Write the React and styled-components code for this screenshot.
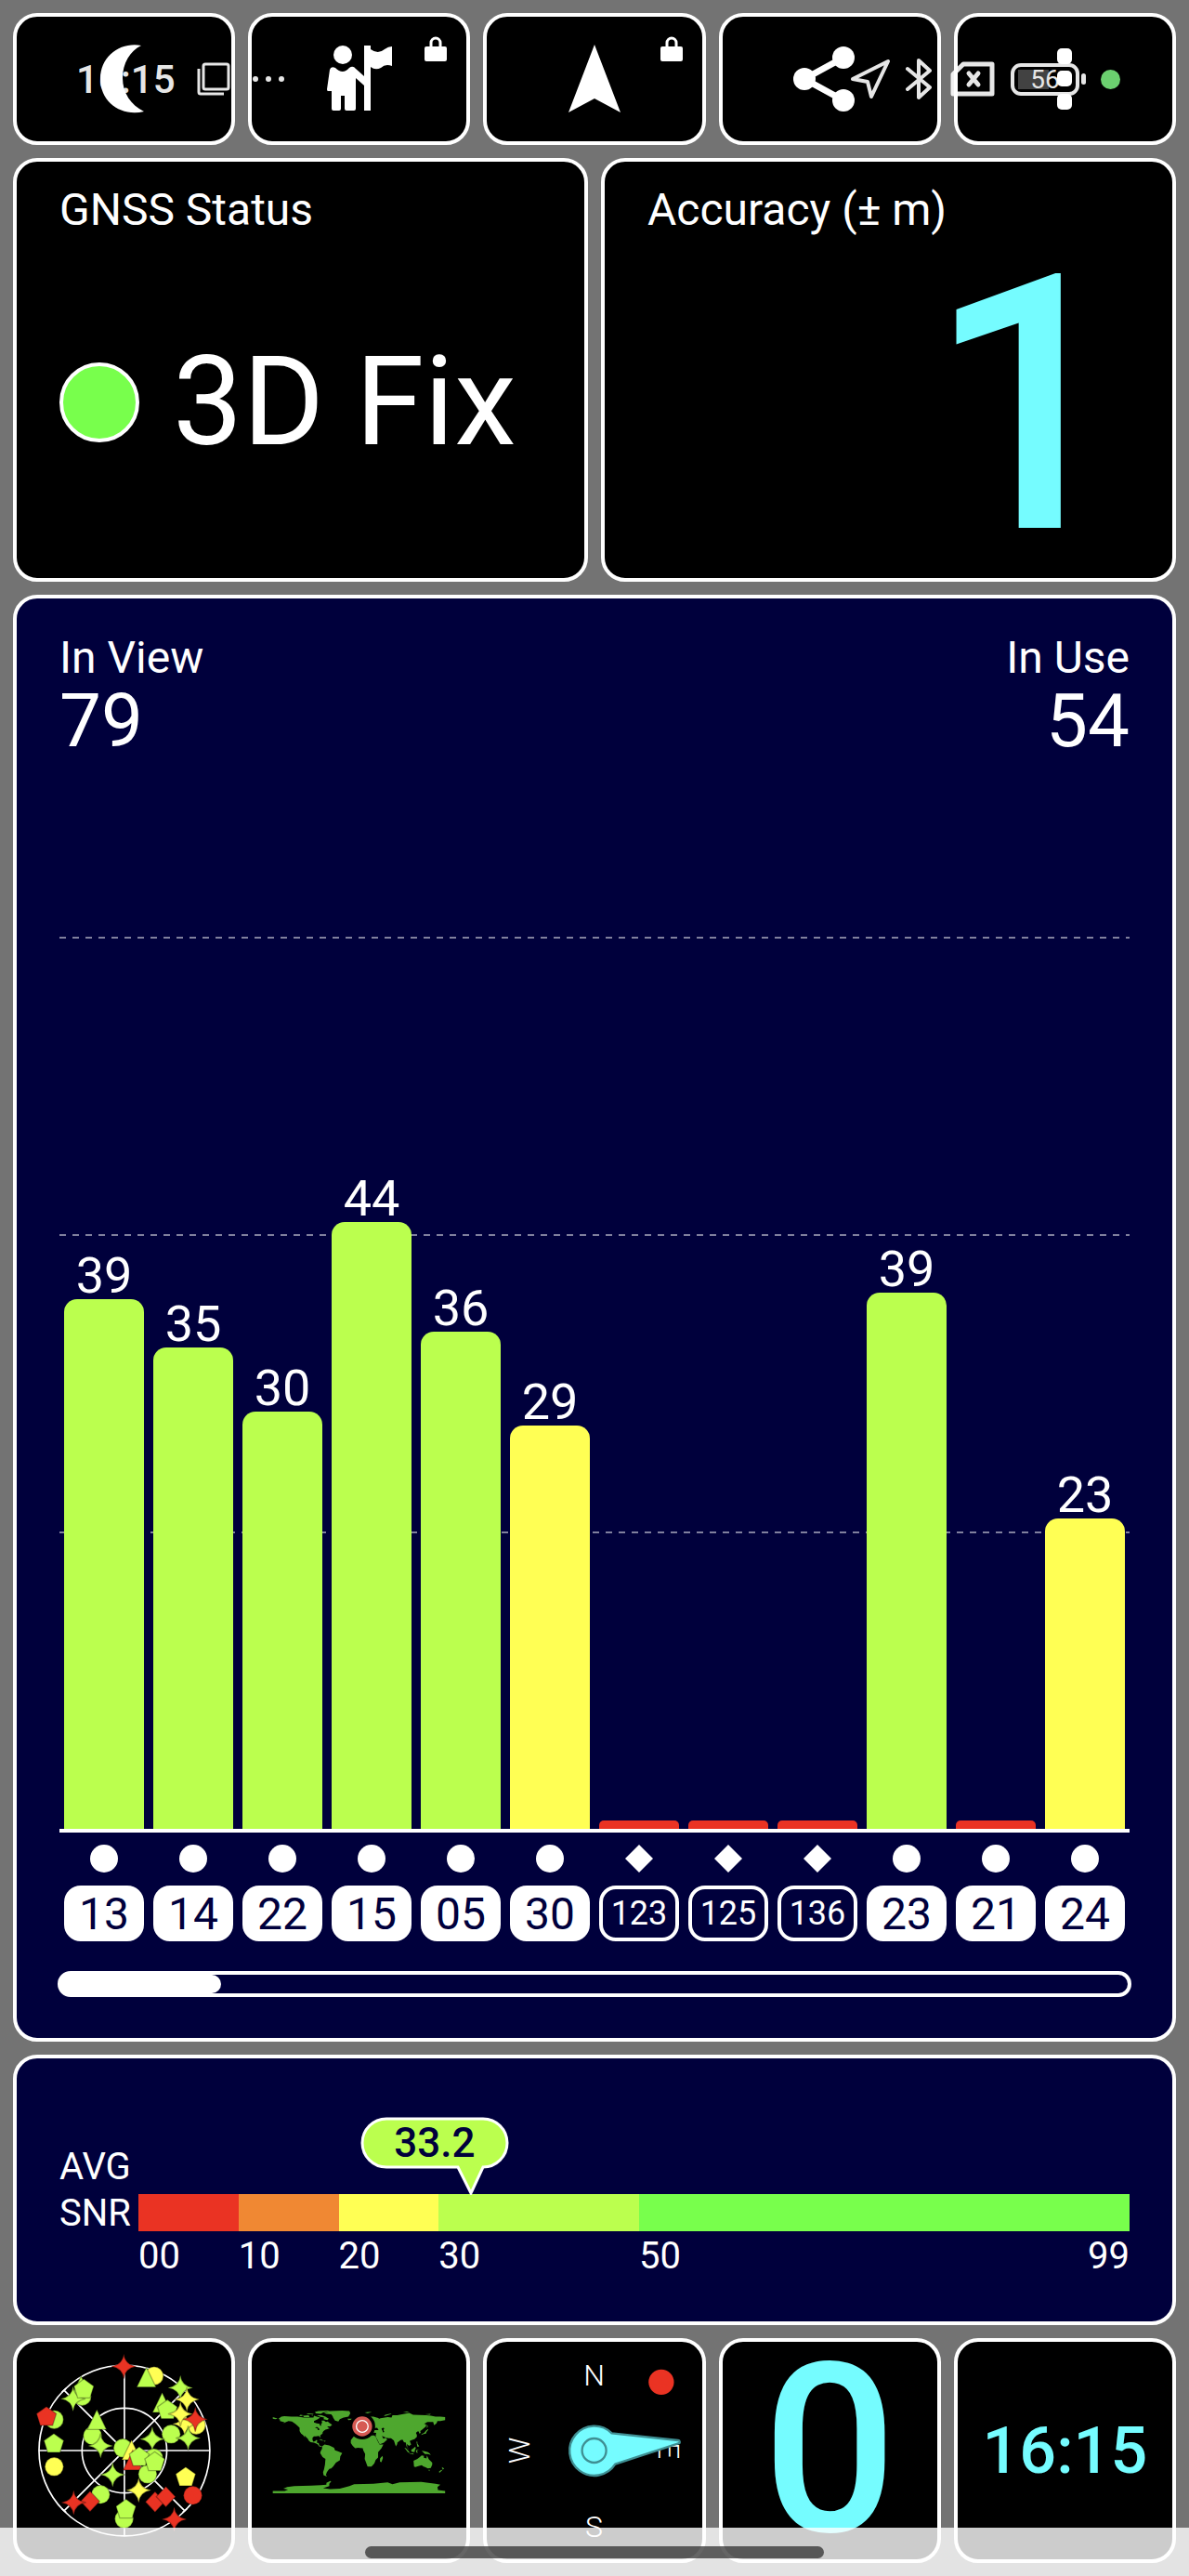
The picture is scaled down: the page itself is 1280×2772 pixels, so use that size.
import styled, { createGlobalStyle } from "styled-components";

const colors = {
  red: "#ea3323",
  orange: "#f08833",
  yellow: "#ffff54",
  lime: "#bbff4e",
  green: "#78ff4c",
  cyan: "#75fcff",
  navy: "#00003c",
  grey: "#737373",
};

const GlobalStyle = createGlobalStyle`
  * {
    box-sizing: border-box;
  }

  body {
    margin: 0;
    background: ${colors.grey};
    color: #fff;
    font-family: Roboto, "Liberation Sans", sans-serif;
  }
`;

const Page = styled.main`
  position: relative;
  display: flex;
  flex-direction: column;
  gap: 14px;
  min-height: 100vh;
  padding: 14px;
`;

const Row = styled.div`
  display: grid;
  grid-template-columns: repeat(${(p) => p.$columns}, minmax(0, 1fr));
  gap: 14px;
`;

const Panel = styled.section`
  display: flex;
  flex-direction: column;
  flex: ${(p) => (p.$grow ? 1 : "none")};
  border: 4px solid #fff;
  border-radius: 26px;
  background: ${(p) => (p.$navy ? colors.navy : "#000")};
`;

const TileButton = styled.button`
  position: relative;
  display: flex;
  align-items: center;
  justify-content: center;
  height: ${(p) => (p.$tall ? 242 : 142)}px;
  padding: 0;
  border: 4px solid #fff;
  border-radius: 26px;
  background: #000;
  color: #fff;
  font: inherit;

  .lock {
    position: absolute;
    top: 21px;
    right: 21px;
  }
`;

const StatusPanel = styled(Panel)`
  height: 456px;
  padding: 24px 46px 10px;
`;

const Label = styled.h2`
  margin: 0;
  font-size: 48px;
  font-weight: 400;
  line-height: 56px;
`;

const FixRow = styled.div`
  display: flex;
  flex: 1;
  align-items: center;
  gap: 36px;
  font-size: 134px;
  line-height: 160px;
  white-space: nowrap;
`;

const FixDot = styled.span`
  width: 86px;
  height: 86px;
  border: 4px solid #fff;
  border-radius: 50%;
  background: ${colors.green};
`;

const AccuracyValue = styled.div`
  display: flex;
  flex: 1;
  align-items: center;
  justify-content: flex-end;
  padding-top: 8px;
  color: ${colors.cyan};
  font-size: 384px;
  font-weight: 500;
  line-height: 350px;
`;

const ChartPanel = styled(Panel)`
  padding: 36px 46px 44px;
`;

const Counts = styled.div`
  display: flex;
  justify-content: space-between;
  margin-bottom: 192px;
`;

const Count = styled.div`
  text-align: ${(p) => p.$align};

  p {
    margin: 0;
    font-size: 80px;
    line-height: 80px;
  }
`;

const Plot = styled.div`
  position: relative;
  display: flex;
  flex: 1;
  min-height: 400px;
  border-bottom: 4px solid #fff;
`;

const GridLines = styled.div`
  position: absolute;
  inset: 0;
  display: grid;
  grid-template-rows: repeat(3, 1fr);

  span {
    height: 2px;
    background: repeating-linear-gradient(
      to right,
      rgb(255 255 255 / 50%) 0 7px,
      transparent 7px 14px
    );
  }
`;

const BarCell = styled.div`
  position: relative;
  display: flex;
  flex: 1;
  flex-direction: column;
  justify-content: flex-end;
  padding: 0 5px;
  font-size: 54px;
  line-height: 50px;
  text-align: center;
`;

const Bar = styled.div`
  flex: none;
  border-radius: ${(p) => (p.$flat ? "5px 5px" : "14px 14px")} 0 0;
  background: ${(p) => p.$color};
`;

const Satellites = styled.div`
  display: flex;
  margin: 13px 0 32px;
`;

const Satellite = styled.div`
  display: flex;
  flex: 1;
  flex-direction: column;
  align-items: center;
  gap: 14px;
  padding: 0 5px;
`;

const SatelliteTag = styled.span`
  display: flex;
  align-items: center;
  justify-content: center;
  width: 100%;
  height: 60px;
  border: 4px solid #fff;
  border-radius: 18px;
  background: ${(p) => (p.$used ? "#fff" : colors.navy)};
  color: ${(p) => (p.$used ? colors.navy : "#fff")};
  font-size: ${(p) => (p.$used ? 48 : 36)}px;
`;

const ScrollTrack = styled.div`
  height: 28px;
  margin: 0 -2px;
  border: 4px solid #fff;
  border-radius: 14px;
`;

const ScrollThumb = styled.div`
  width: 15%;
  height: 20px;
  border-radius: 0 10px 10px 0;
  background: #fff;
`;

const SnrPanel = styled(Panel)`
  flex-direction: row;
  align-items: flex-start;
  height: 291px;
  padding: 92px 46px 0;
`;

const SnrLabel = styled.h2`
  width: 85px;
  margin: 0;
  font-size: 40px;
  font-weight: 400;
  line-height: 50px;
`;

const SnrScale = styled.div`
  position: relative;
  display: flex;
  flex: 1;
  padding-top: 54px;
`;

const SnrSegment = styled.div`
  display: flex;
  flex: ${(p) => p.$span} 0 0;
  justify-content: space-between;
  min-width: 0;
  border-top: 40px solid ${(p) => p.$color};
  font-size: 40px;
  line-height: 54px;
`;

const Bubble = styled.div`
  position: absolute;
  top: -29px;
  width: 160px;
  height: 84px;
  margin-left: -119px;
  color: ${colors.navy};
  font-size: 44px;
  font-weight: 500;
  line-height: 56px;
  text-align: center;

  svg {
    position: absolute;
    inset: 0;
  }

  span {
    position: relative;
  }
`;

const TileNumber = styled.span`
  color: ${colors.cyan};
  font-size: ${(p) => (p.$big ? 254 : 70)}px;
  font-weight: 500;
  line-height: 242px;
`;

const StatusBar = styled.header`
  position: absolute;
  top: 0;
  left: 0;
  right: 0;
  display: flex;
  align-items: center;
  height: 170px;
  padding: 0 74px 0 82px;
  opacity: 0.9;
  font-size: 42px;
  font-weight: 500;
  pointer-events: none;
`;

const StatusGroup = styled.div`
  display: flex;
  align-items: center;
  gap: ${(p) => p.$gap}px;
  margin-left: ${(p) => (p.$end ? "auto" : 0)};
`;

const Battery = styled.span`
  position: relative;
  display: flex;
  align-items: center;
  justify-content: center;
  width: 74px;
  height: 35px;
  margin-right: 6px;
  border: 4px solid #fff;
  border-radius: 11px;
  background: linear-gradient(#4a4a4a, #4a4a4a) 4px 3px / 33px 21px no-repeat;
  font-size: 28px;
  font-weight: 400;

  &::after {
    content: "";
    position: absolute;
    right: -11px;
    width: 5px;
    height: 12px;
    border-radius: 3px;
    background: #fff;
  }
`;

const PrivacyDot = styled.span`
  width: 21px;
  height: 21px;
  border-radius: 50%;
  background: #77e77c;
`;

const NavBar = styled.footer`
  position: absolute;
  right: 0;
  bottom: 0;
  left: 0;
  display: flex;
  align-items: center;
  justify-content: center;
  height: 52px;
  background: rgb(255 255 255 / 80%);
  pointer-events: none;
`;

const HomePill = styled.span`
  width: 494px;
  height: 13px;
  border-radius: 7px;
  background: rgb(44 44 44 / 73%);
`;

const satellites = [
  { id: "13", snr: 39, level: 38.6, used: true },
  { id: "14", snr: 35, level: 35.1, used: true },
  { id: "22", snr: 30, level: 30.4, used: true },
  { id: "15", snr: 44, level: 44.2, used: true },
  { id: "05", snr: 36, level: 36.2, used: true },
  { id: "30", snr: 29, level: 29.4, used: true },
  { id: "123", snr: 0, level: 0.6, diamond: true },
  { id: "125", snr: 0, level: 0.6, diamond: true },
  { id: "136", snr: 0, level: 0.6, diamond: true },
  { id: "23", snr: 39, level: 39.1, used: true },
  { id: "21", snr: 0, level: 0.6, used: true },
  { id: "24", snr: 23, level: 22.6, used: true },
];

const MAX_LEVEL = 65;

const snrColor = (snr) => {
  if (snr >= 50) return colors.green;
  if (snr >= 30) return colors.lime;
  if (snr >= 20) return colors.yellow;
  if (snr >= 10) return colors.orange;
  return colors.red;
};

const snrSegments = [
  { from: "00", span: 10, color: colors.red },
  { from: "10", span: 10, color: colors.orange },
  { from: "20", span: 10, color: colors.yellow },
  { from: "30", span: 20, color: colors.lime },
  { from: "50", span: 49, color: colors.green, to: "99" },
];

const shapes = {
  circle: "M-30 0a30 30 0 1 0 60 0a30 30 0 1 0 -60 0z",
  star: "M0 -40Q4 -6 40 0Q4 6 0 40Q-4 6 -40 0Q-4 -6 0 -40z",
  triangle: "M0 -36L31 28H-31z",
  pentagon: "M0 -32L32 -9L20 29H-20L-32 -9z",
  diamond: "M0 -33L31 0L0 33L-31 0z",
};

const L = colors.lime;
const Y = colors.yellow;
const R = colors.red;

// [shape, x, y, fill], painted from back to front
const sky = [
  ["star", 400, 139, R],
  ["circle", 498, 170, Y],
  ["triangle", 473, 178, L],
  ["star", 583, 208, L],
  ["circle", 265, 236, L],
  ["triangle", 262, 206, L],
  ["star", 236, 244, L],
  ["pentagon", 271, 212, L],
  ["star", 604, 246, Y],
  ["triangle", 524, 260, L],
  ["pentagon", 541, 279, L],
  ["circle", 634, 329, Y],
  ["star", 597, 325, Y],
  ["star", 583, 293, Y],
  ["circle", 175, 311, L],
  ["pentagon", 150, 301, R],
  ["star", 631, 310, R],
  ["circle", 299, 363, L],
  ["triangle", 313, 315, L],
  ["pentagon", 174, 388, L],
  ["star", 325, 396, L],
  ["circle", 553, 358, L],
  ["star", 492, 374, L],
  ["star", 608, 371, L],
  ["circle", 397, 403, L],
  ["triangle", 425, 413, Y],
  ["triangle", 429, 446, R],
  ["circle", 477, 487, L],
  ["circle", 497, 435, L],
  ["pentagon", 450, 431, L],
  ["pentagon", 500, 447, L],
  ["circle", 175, 463, Y],
  ["star", 364, 489, L],
  ["pentagon", 600, 496, Y],
  ["star", 448, 539, Y],
  ["circle", 623, 556, R],
  ["circle", 325, 553, L],
  ["diamond", 291, 575, R],
  ["star", 238, 579, R],
  ["diamond", 501, 577, R],
  ["diamond", 536, 560, R],
  ["circle", 401, 632, L],
  ["pentagon", 407, 600, L],
  ["star", 563, 633, R],
];

// Outlines as longitude,latitude pairs
const land = [
  "-168,66 -162,70 -156,71 -141,70 -128,70 -115,68 -108,68 -95,68 -94,72 -85,69 -81,68 -86,65 -94,61 -94,58 -88,56 -82,55 -82,52 -79,51 -79,55 -77,57 -78,62 -73,62 -69,59 -65,60 -62,57 -56,53 -60,50 -66,50 -65,48 -61,46 -66,44 -70,43 -74,40 -76,37 -76,35 -81,31 -80,26 -82,28 -84,30 -90,29 -94,29 -97,26 -97,21 -95,18 -91,19 -90,21 -87,21 -88,16 -84,15 -83,10 -80,9 -77,8 -79,7 -83,8 -87,13 -94,16 -101,17 -105,20 -107,24 -112,29 -114,31 -113,27 -110,23 -114,28 -117,32 -121,35 -124,40 -124,47 -128,51 -133,55 -140,60 -147,61 -152,59 -160,55 -155,58 -158,59 -165,61 -165,64",
  "-73,78 -60,82 -35,83 -20,82 -18,77 -22,70 -32,68 -40,65 -43,60 -50,62 -54,68 -55,71 -58,75 -68,76",
  "-92,80 -85,82 -65,83 -60,82 -75,79 -80,76 -90,77",
  "-117,72 -105,73 -103,69 -115,69",
  "-88,73 -78,73 -70,70 -63,66 -66,63 -74,65 -73,68 -82,70",
  "-125,72 -122,74 -116,73 -121,71",
  "-110,75 -106,77 -94,76 -97,75 -104,75",
  "-100,73 -96,74 -96,72",
  "-85,22 -80,23 -74,20 -78,20 -82,22",
  "-74,20 -69,19 -72,18",
  "-77,8 -72,12 -62,10 -52,5 -50,0 -44,-2 -35,-6 -39,-13 -40,-21 -48,-26 -54,-34 -58,-38 -62,-39 -65,-43 -67,-46 -69,-51 -67,-55 -74,-52 -75,-46 -73,-40 -71,-30 -70,-18 -76,-14 -81,-6 -80,-2 -77,3",
  "-6,36 10,37 11,33 20,31 32,31 35,28 39,19 43,12 51,12 47,4 40,-4 40,-15 35,-20 32,-28 26,-34 18,-34 12,-18 13,-8 9,0 8,4 -2,5 -8,4 -13,9 -17,15 -17,21 -10,30",
  "44,-17 49,-12 50,-16 47,-25 44,-24",
  "-9,43 -9,37 -5,36 0,39 3,42 8,44 12,42 16,38 18,40 13,45 19,42 23,37 24,41 27,40 27,37 36,36 35,31 35,28 39,21 43,13 45,13 52,16 59,22 56,26 51,24 48,30 57,26 62,25 67,25 73,20 77,8 80,13 80,16 87,21 91,22 94,17 98,16 99,9 103,2 104,1 101,6 100,13 105,9 109,12 106,19 110,21 116,23 121,28 121,32 119,36 122,39 125,39 126,35 129,36 128,40 132,43 140,50 140,54 136,55 143,59 155,59 157,52 162,56 164,61 170,61 180,63 180,69 170,70 160,70 150,72 140,73 113,74 105,78 95,76 80,73 70,73 68,68 60,69 45,67 40,65 42,67 30,70 20,70 12,65 5,61 7,58 11,59 13,55 17,57 18,61 22,65 25,65 21,61 30,60 23,59 20,55 10,54 8,57 8,54 0,50 -4,48 -1,46 -2,43",
  "-180,69 -172,67 -170,66 -175,65 -180,66",
  "-24,66 -15,66 -14,64 -22,63",
  "12,79 20,80 27,80 18,77",
  "52,71 55,74 68,77 66,75 57,72",
  "92,79 100,81 105,79",
  "138,75 150,76 148,74",
  "142,54 144,50 142,46",
  "130,32 131,34 136,36 140,41 144,44 145,43 141,38 140,35 135,34",
  "95,5 98,4 104,-2 106,-6 102,-4",
  "105,-6 114,-7 114,-9 106,-7",
  "109,1 114,4 117,7 119,5 117,1 116,-4 110,-3",
  "119,0 125,2 121,-1 123,-5 120,-5",
  "120,18 122,18 122,14 126,8 122,7 121,13",
  "131,-1 137,-2 144,-4 148,-7 150,-10 144,-8 138,-8 134,-4",
  "114,-22 122,-18 127,-14 131,-11 136,-12 135,-15 141,-17 142,-11 146,-19 153,-26 153,-30 150,-37 144,-38 138,-35 135,-34 131,-31 124,-33 118,-35 115,-34",
  "145,-41 148,-41 147,-44",
  "173,-35 178,-38 175,-41",
  "172,-41 174,-42 168,-47 167,-45",
  "-180,-85 -155,-85 -148,-82 -158,-80 -150,-77 -135,-75 -100,-74 -80,-73 -68,-72 -68,-68 -60,-64 -58,-65 -62,-70 -62,-75 -75,-79 -60,-81 -40,-80 -20,-75 -10,-71 30,-70 60,-67 70,-71 85,-67 130,-66 160,-70 170,-72 164,-77 165,-83 180,-85 180,-90 -180,-90",
];

const lakes = [
  "28,42 31,46 38,47 41,42 35,42",
  "47,45 50,47 53,46 51,42 53,38 50,37 49,41",
  "-92,47 -88,49 -84,46 -82,43 -86,42 -87,46",
];

const Lock = () => (
  <svg className="lock" width="24" height="27" viewBox="0 0 24 27">
    <rect y="11" width="24" height="16" rx="2" fill="#fff" />
    <path d="M7 12V7a5 5 0 0 1 10 0v5" fill="none" stroke="#fff" strokeWidth="3" />
  </svg>
);

const SkyPlot = () => (
  <svg width="100%" height="100%" viewBox="54 60 694 702">
    <g fill="none" stroke="#fff" strokeWidth="5">
      <circle cx="402" cy="411" r="276" />
      <circle cx="402" cy="411" r="137" />
      <path d="M126 411H678M402 135V687M207 216L597 606M207 606L597 216" />
      <path d="M200 222L214 210M590 611L604 599M200 599L214 611M590 210L604 222" />
    </g>
    <g stroke="#000" strokeOpacity="0.3" strokeWidth="4">
      {sky.map(([shape, x, y, fill], i) => (
        <path key={i} d={shapes[shape]} fill={fill} transform={`translate(${x} ${y})`} />
      ))}
    </g>
  </svg>
);

const WorldMap = () => (
  <svg width="100%" height="100%" viewBox="34 60 694 702">
    <g transform="translate(380.5 410) scale(1.547 -1.547)">
      {land.map((points, i) => (
        <polygon key={i} points={points} fill="#4ea72e" />
      ))}
      {lakes.map((points, i) => (
        <polygon key={i} points={points} fill="#000" />
      ))}
    </g>
    <circle cx="391" cy="333" r="42" fill="#000" />
    <circle cx="391" cy="333" r="32" fill="#d65a54" />
    <circle cx="391" cy="333" r="19" fill="none" stroke="#fff" strokeWidth="4" />
  </svg>
);

const Compass = () => (
  <svg width="100%" height="100%" viewBox="43 60 694 702">
    <g fill="#fff" fontSize="96" fontWeight="300" textAnchor="middle">
      <text x="390" y="200">N</text>
      <text x="390" y="690">S</text>
      <text transform="translate(182 411) rotate(-90)">W</text>
      <text transform="translate(598 411) rotate(90)">E</text>
    </g>
    <circle cx="607" cy="190" r="41" fill={colors.red} />
    <path
      d="M447 355L661 378A5 5 0 0 1 662 388L458 455A80 80 0 1 1 447 355z"
      fill={colors.cyan}
      stroke="#3f8f93"
      strokeWidth="7"
      strokeLinejoin="round"
    />
    <circle cx="390" cy="411" r="39" fill="none" stroke="#3f8f93" strokeWidth="7" />
  </svg>
);

const App = () => (
  <>
    <GlobalStyle />
    <Page>
      <Row $columns={5}>
        <TileButton aria-label="Night mode">
          <svg width="52" height="74" viewBox="0 0 52 74">
            <path d="M44 1C22 -3 0 12 0 37s23 41 47 35C33 65 24 52 24 36S32 7 44 1z" fill="#fff" />
          </svg>
        </TileButton>
        <TileButton aria-label="Guide">
          <svg width="70" height="72" viewBox="352 50 70 72" fill="#fff">
            <circle cx="369" cy="60" r="10" />
            <path d="M392 50h7v70h-7z" />
            <path d="M399 54q8 6 15 0q4-3 8-3v21q-7-3-12 2q-6 3-11-1z" />
            <path d="M355 76q1-4 6-2q8 8 15 0q4-3 7 1l9 8v10l-9-8v33q0 2-2 2h-8q-2 0-2-2v-14h-4v14q0 2-2 2h-6q-2 0-2-2V99h-4q-1 0-1-2z" />
          </svg>
          <Lock />
        </TileButton>
        <TileButton aria-label="Navigate">
          <svg width="56" height="74" viewBox="0 0 56 74">
            <path d="M28 0L56 73L28 58L0 73z" fill="#fff" />
          </svg>
          <Lock />
        </TileButton>
        <TileButton aria-label="Share">
          <svg width="78" height="70" viewBox="0 0 78 70" fill="#fff">
            <path d="M54 12L12 35L54 58" fill="none" stroke="#fff" strokeWidth="7" />
            <circle cx="12" cy="35" r="12" />
            <circle cx="54" cy="12" r="12" />
            <circle cx="54" cy="58" r="12" />
          </svg>
        </TileButton>
        <TileButton aria-label="More options">
          <svg width="16" height="66" viewBox="0 0 16 66" fill="#fff">
            <rect width="16" height="17" rx="5" />
            <rect y="24" width="16" height="17" rx="5" />
            <rect y="49" width="16" height="17" rx="5" />
          </svg>
        </TileButton>
      </Row>

      <Row $columns={2}>
        <StatusPanel>
          <Label>GNSS Status</Label>
          <FixRow>
            <FixDot />
            3D Fix
          </FixRow>
        </StatusPanel>
        <StatusPanel>
          <Label>Accuracy (± m)</Label>
          <AccuracyValue>1</AccuracyValue>
        </StatusPanel>
      </Row>

      <ChartPanel $navy $grow>
        <Counts>
          <Count $align="left">
            <Label>In View</Label>
            <p>79</p>
          </Count>
          <Count $align="right">
            <Label>In Use</Label>
            <p>54</p>
          </Count>
        </Counts>
        <Plot>
          <GridLines>
            <span />
            <span />
            <span />
          </GridLines>
          {satellites.map((item) => (
            <BarCell key={item.id}>
              {item.snr > 0 && item.snr}
              <Bar
                $color={snrColor(item.snr)}
                $flat={!item.snr}
                style={{ height: `${(item.level / MAX_LEVEL) * 100}%` }}
              />
            </BarCell>
          ))}
        </Plot>
        <Satellites>
          {satellites.map((item) => (
            <Satellite key={item.id}>
              <svg width="30" height="30" viewBox="0 0 30 30" fill="#fff">
                {item.diamond ? <path d="M15 0L30 15L15 30L0 15z" /> : <circle cx="15" cy="15" r="15" />}
              </svg>
              <SatelliteTag $used={item.used}>{item.id}</SatelliteTag>
            </Satellite>
          ))}
        </Satellites>
        <ScrollTrack>
          <ScrollThumb />
        </ScrollTrack>
      </ChartPanel>

      <SnrPanel $navy>
        <SnrLabel>
          AVG
          <br />
          SNR
        </SnrLabel>
        <SnrScale>
          <Bubble style={{ left: `${(33.2 / 99) * 100}%` }}>
            <svg width="160" height="84" viewBox="0 0 160 84">
              <path
                d="M28 2H132A26 26 0 0 1 132 54L119 82L105 54H28A26 26 0 0 1 28 2z"
                fill={colors.lime}
                stroke="#fff"
                strokeWidth="3"
              />
            </svg>
            <span>33.2</span>
          </Bubble>
          {snrSegments.map((item) => (
            <SnrSegment key={item.from} $span={item.span} $color={item.color}>
              <span>{item.from}</span>
              {item.to && <span>{item.to}</span>}
            </SnrSegment>
          ))}
        </SnrScale>
      </SnrPanel>

      <Row $columns={5}>
        <TileButton $tall aria-label="Sky view">
          <SkyPlot />
        </TileButton>
        <TileButton $tall aria-label="World map">
          <WorldMap />
        </TileButton>
        <TileButton $tall aria-label="Compass">
          <Compass />
        </TileButton>
        <TileButton $tall>
          <TileNumber $big>0</TileNumber>
        </TileButton>
        <TileButton $tall>
          <TileNumber>16:15</TileNumber>
        </TileButton>
      </Row>

      <StatusBar>
        <StatusGroup $gap={23}>
          16:15
          <svg width="36" height="36" viewBox="0 0 36 36" fill="none" stroke="#fff" strokeWidth="3">
            <rect x="7" y="2" width="27" height="27" rx="2" />
            <path d="M2 7V32Q2 34 4 34H29" />
          </svg>
          <svg width="36" height="8" viewBox="0 0 36 8" fill="#fff">
            <circle cx="4" cy="4" r="3" />
            <circle cx="18" cy="4" r="3" />
            <circle cx="32" cy="4" r="3" />
          </svg>
        </StatusGroup>
        <StatusGroup $gap={17} $end>
          <svg width="42" height="44" viewBox="0 0 42 44" fill="none" stroke="#fff" strokeWidth="4" strokeLinejoin="round">
            <path d="M40 3L22 41L18 25L2 22z" />
          </svg>
          <svg width="28" height="46" viewBox="0 0 28 46" fill="none" stroke="#fff" strokeWidth="4" strokeLinejoin="round" strokeLinecap="round">
            <path d="M2 12L26 32L14 43V3L26 14L2 34" />
          </svg>
          <svg width="51" height="38" viewBox="-3 0 51 38" fill="none" stroke="#fff" strokeWidth="5" strokeLinejoin="round" strokeLinecap="round">
            <path d="M14 3H45V35H3V14z" />
            <path d="M20 13L30 25M30 13L20 25" />
          </svg>
          <Battery>56</Battery>
          <PrivacyDot />
        </StatusGroup>
      </StatusBar>

      <NavBar>
        <HomePill />
      </NavBar>
    </Page>
  </>
);

export default App;
